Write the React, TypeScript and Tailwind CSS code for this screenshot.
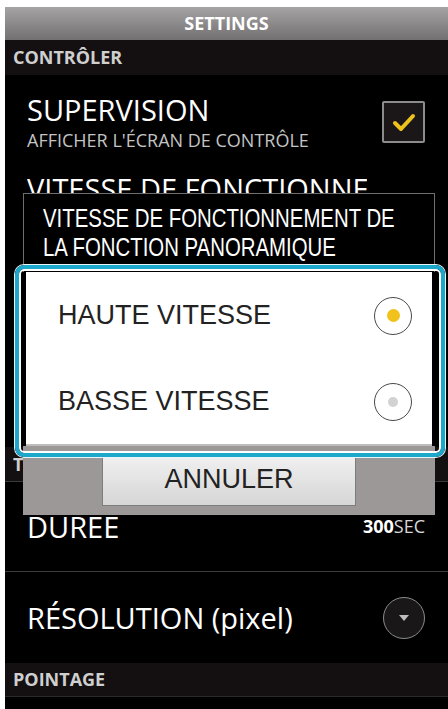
import React from 'react';

function Radio({ checked }: { checked: boolean }) {
  return (
    <span className="flex h-[38px] w-[38px] items-center justify-center rounded-full border-[1.5px] border-[#4a4a4a] bg-white">
      {checked ? (
        <span className="h-[13px] w-[13px] rounded-full bg-[#f1c21b]" />
      ) : (
        <span className="h-[10px] w-[10px] rounded-full bg-[#d2d2d2]" />
      )}
    </span>
  );
}

export default function App() {
  return (
    <div className="h-[709px] w-[448px] overflow-hidden bg-white pl-[5px] pt-[7px]">
      <div className="relative h-[702px] overflow-hidden bg-black font-['Open_Sans',sans-serif]">
        {/* Header */}
        <div className="flex h-[33px] items-center justify-center bg-gradient-to-b from-[#a6a4a5] to-[#727071] text-[18px] font-bold text-white">
          SETTINGS
        </div>

        {/* CONTRÔLER */}
        <div className="flex h-[35px] items-center bg-[#141012] px-[8px] text-[18px] font-bold text-[#cfcfcf]">
          CONTRÔLER
        </div>

        <div className="flex h-[93px] items-center justify-between pl-[22px] pr-[23px]">
          <div>
            <div className="text-[29px] leading-[34px] text-white">SUPERVISION</div>
            <div className="mt-[2px] text-[18px] leading-[22px] text-[#c4c4c4]">AFFICHER L'ÉCRAN DE CONTRÔLE</div>
          </div>
          <div className="flex h-[42px] w-[43px] items-center justify-center rounded-[2px] border-2 border-[#8c8c8c] bg-[#1b1719]">
            <svg width="26" height="22" viewBox="0 0 26 22">
              <path d="M4 12 L10 18 L22 5" fill="none" stroke="#ecc21c" strokeWidth="4" strokeLinecap="round" strokeLinejoin="round" />
            </svg>
          </div>
        </div>

        <div className="h-[93px] pl-[22px] pt-[4px]">
          <div className="w-[340px] overflow-hidden whitespace-nowrap text-[29px] leading-[34px] text-white">
            VITESSE DE FONCTIONNEMENT
          </div>
        </div>
        <div className="h-[93px]" />
        <div className="h-[93px]" />

        {/* T band */}
        <div className="flex h-[35px] items-center border-b border-[#3a3a3a] bg-[#141012] px-[8px] text-[18px] font-bold text-[#cfcfcf]">
          T
        </div>

        <div className="flex h-[90px] items-center justify-between border-b border-[#3c3c3c] pl-[22px] pr-[23px]">
          <div className="text-[29px] leading-[34px] text-white">DUREE</div>
          <div className="text-[18px] text-[#d8d8d8]">
            <span className="font-bold text-white">300</span>SEC
          </div>
        </div>

        <div className="flex h-[91px] items-center justify-between pl-[22px] pr-[23px]">
          <div className="text-[29px] leading-[34px] text-white">RÉSOLUTION (pixel)</div>
          <div className="flex h-[42px] w-[42px] items-center justify-center rounded-full border-[1.5px] border-[#8a8a8a] bg-[#1a1718]">
            <svg width="12" height="8" viewBox="0 0 12 8">
              <path d="M1 1 L11 1 L6 7 Z" fill="#bdbdbd" />
            </svg>
          </div>
        </div>

        <div className="flex h-[34px] items-center border-b border-[#2a2a2a] bg-[#141012] px-[8px] text-[18px] font-bold text-[#cfcfcf]">
          POINTAGE
        </div>

        {/* Dialog */}
        <div className="absolute left-[18px] top-[186px] w-[412px] bg-black font-['Liberation_Sans',sans-serif]">
          <div className="h-[79px] border border-b-0 border-[#6e6e6e] px-[19px] pt-[10px] text-[25px] leading-[29px] text-white">
            <div className="origin-left scale-x-[0.815] whitespace-nowrap">VITESSE DE FONCTIONNEMENT DE</div>
            <div className="origin-left scale-x-[0.815] whitespace-nowrap">LA FONCTION PANORAMIQUE</div>
          </div>
          <div className="border-x-[3px] border-black bg-white">
            <div className="flex h-[87px] items-center justify-between pl-[32px] pr-[20px]">
              <span className="text-[27px] text-[#222]">HAUTE VITESSE</span>
              <Radio checked />
            </div>
            <div className="flex h-[87px] items-center justify-between border-b-2 border-[#bdbdbd] pl-[32px] pr-[20px]">
              <span className="text-[27px] text-[#222]">BASSE VITESSE</span>
              <Radio checked={false} />
            </div>
          </div>
          <div className="flex justify-center bg-[#9c9898] pb-[9px] pt-[6px]">
            <div className="flex h-[54px] w-[254px] items-center justify-center border border-[#7d7d7d] bg-gradient-to-b from-[#f2f2f2] to-[#d6d6d6] text-[27px] text-[#222]">
              ANNULER
            </div>
          </div>
        </div>

        {/* Highlight */}
        <div className="absolute left-[10px] top-[258px] h-[192px] w-[430px] rounded-[9px] border-[4px] border-[#1ba8cb] shadow-[0_0_0_1px_#e8f6fa,inset_0_0_0_2px_#ffffff]" />
      </div>
    </div>
  );
}
